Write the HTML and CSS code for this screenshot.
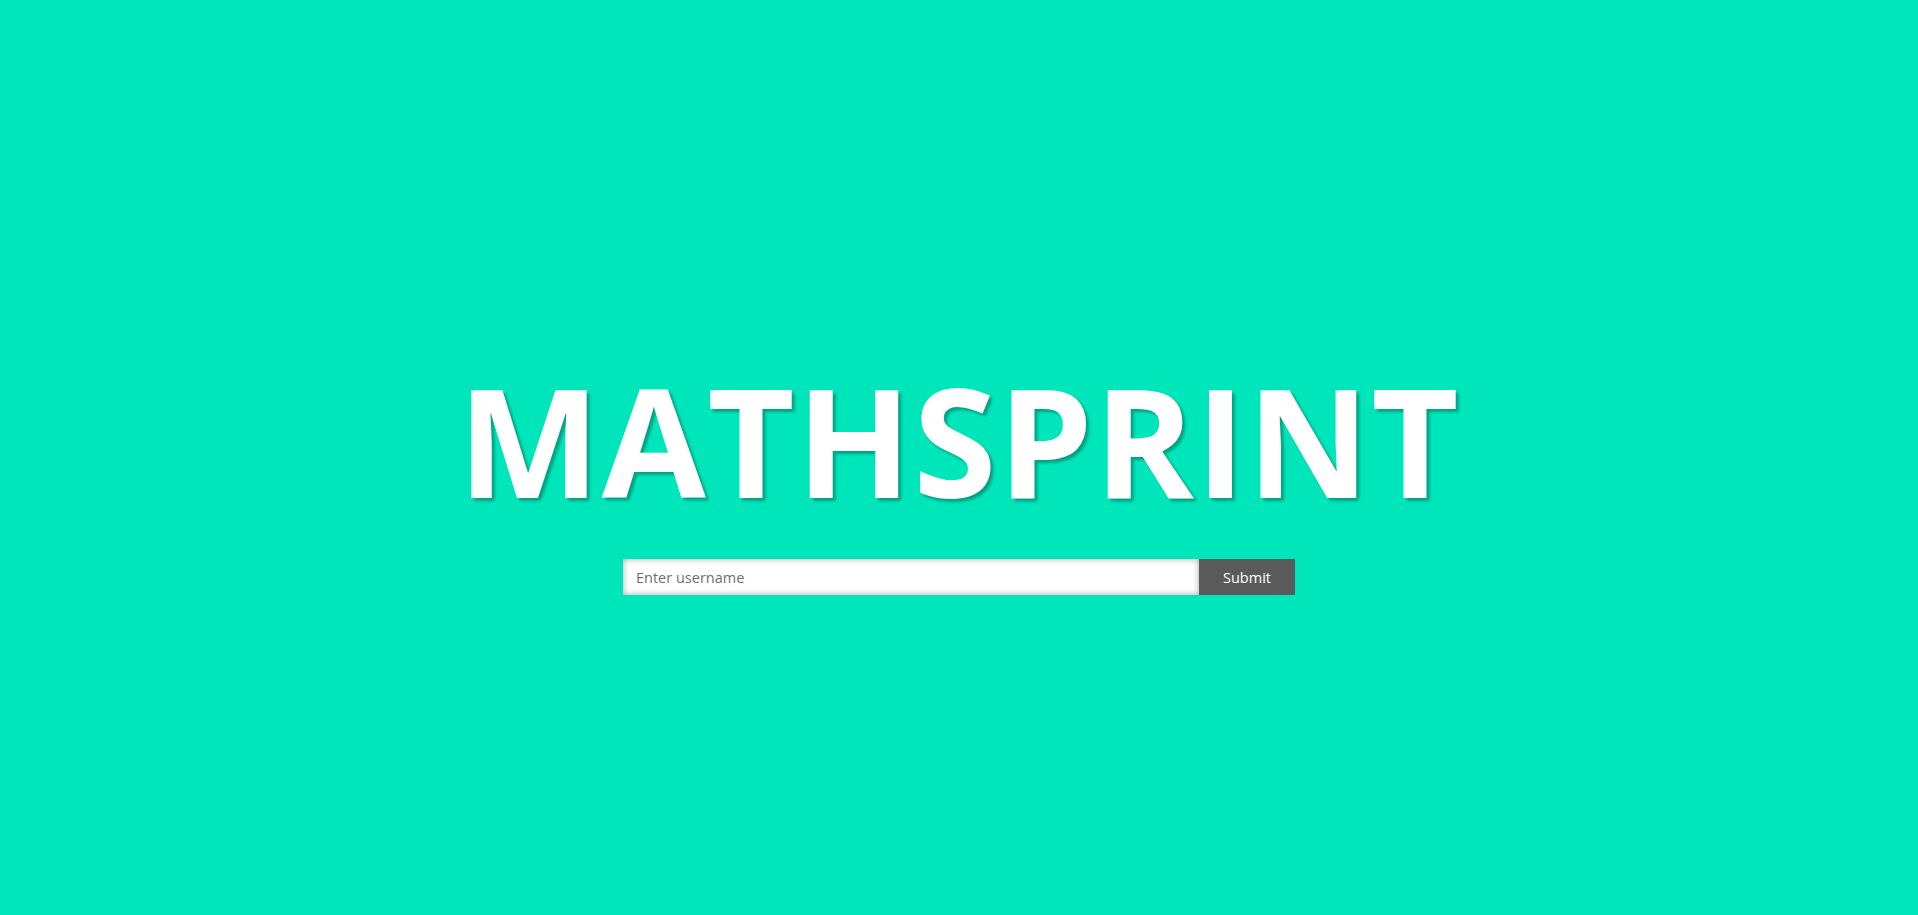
FILE: index.html
```html
<!DOCTYPE html>
<html lang="en">
<head>
<meta charset="utf-8">
<title>MathSprint</title>
<link rel="stylesheet" href="styles.css">
</head>
<body>
<main class="page">
  <h1 class="title">MATHSPRINT</h1>
  <form class="login" onsubmit="return false;">
    <input class="login-input" type="text" placeholder="Enter username">
    <button class="login-btn" type="submit">Submit</button>
  </form>
</main>
</body>
</html>
```
FILE: styles.css
```css
html, body {
  margin: 0;
  padding: 0;
  height: 100%;
}
body {
  background: #00e6bb;
  font-family: "Open Sans", "Noto Sans", sans-serif;
}
.page {
  box-sizing: border-box;
  height: 100%;
  padding-top: 44px;
  display: flex;
  flex-direction: column;
  align-items: center;
  justify-content: center;
}
.title {
  margin: 0;
  color: #ffffff;
  font-family: "Open Sans", sans-serif;
  font-weight: 700;
  font-size: 151px;
  line-height: 1;
  letter-spacing: 1.5px;
  text-shadow: 3px 3px 3px rgba(0, 0, 0, 0.3);
}
.login {
  display: flex;
  margin-top: 44px;
}
.login-input {
  box-sizing: border-box;
  width: 576px;
  height: 36px;
  border: 0;
  margin: 0;
  padding: 0 13px;
  background: #ffffff;
  box-shadow: inset 0 0 6px rgba(0, 0, 0, 0.35);
  font-family: "Open Sans", sans-serif;
  font-size: 14.5px;
  color: #333;
  outline: none;
}
.login-input::placeholder {
  color: #6f6f6f;
}
.login-btn {
  box-sizing: border-box;
  width: 96px;
  height: 36px;
  border: 0;
  margin: 0;
  background: #5a5a5a;
  color: #ffffff;
  font-family: "Open Sans", sans-serif;
  font-size: 14.5px;
  cursor: pointer;
}
```
